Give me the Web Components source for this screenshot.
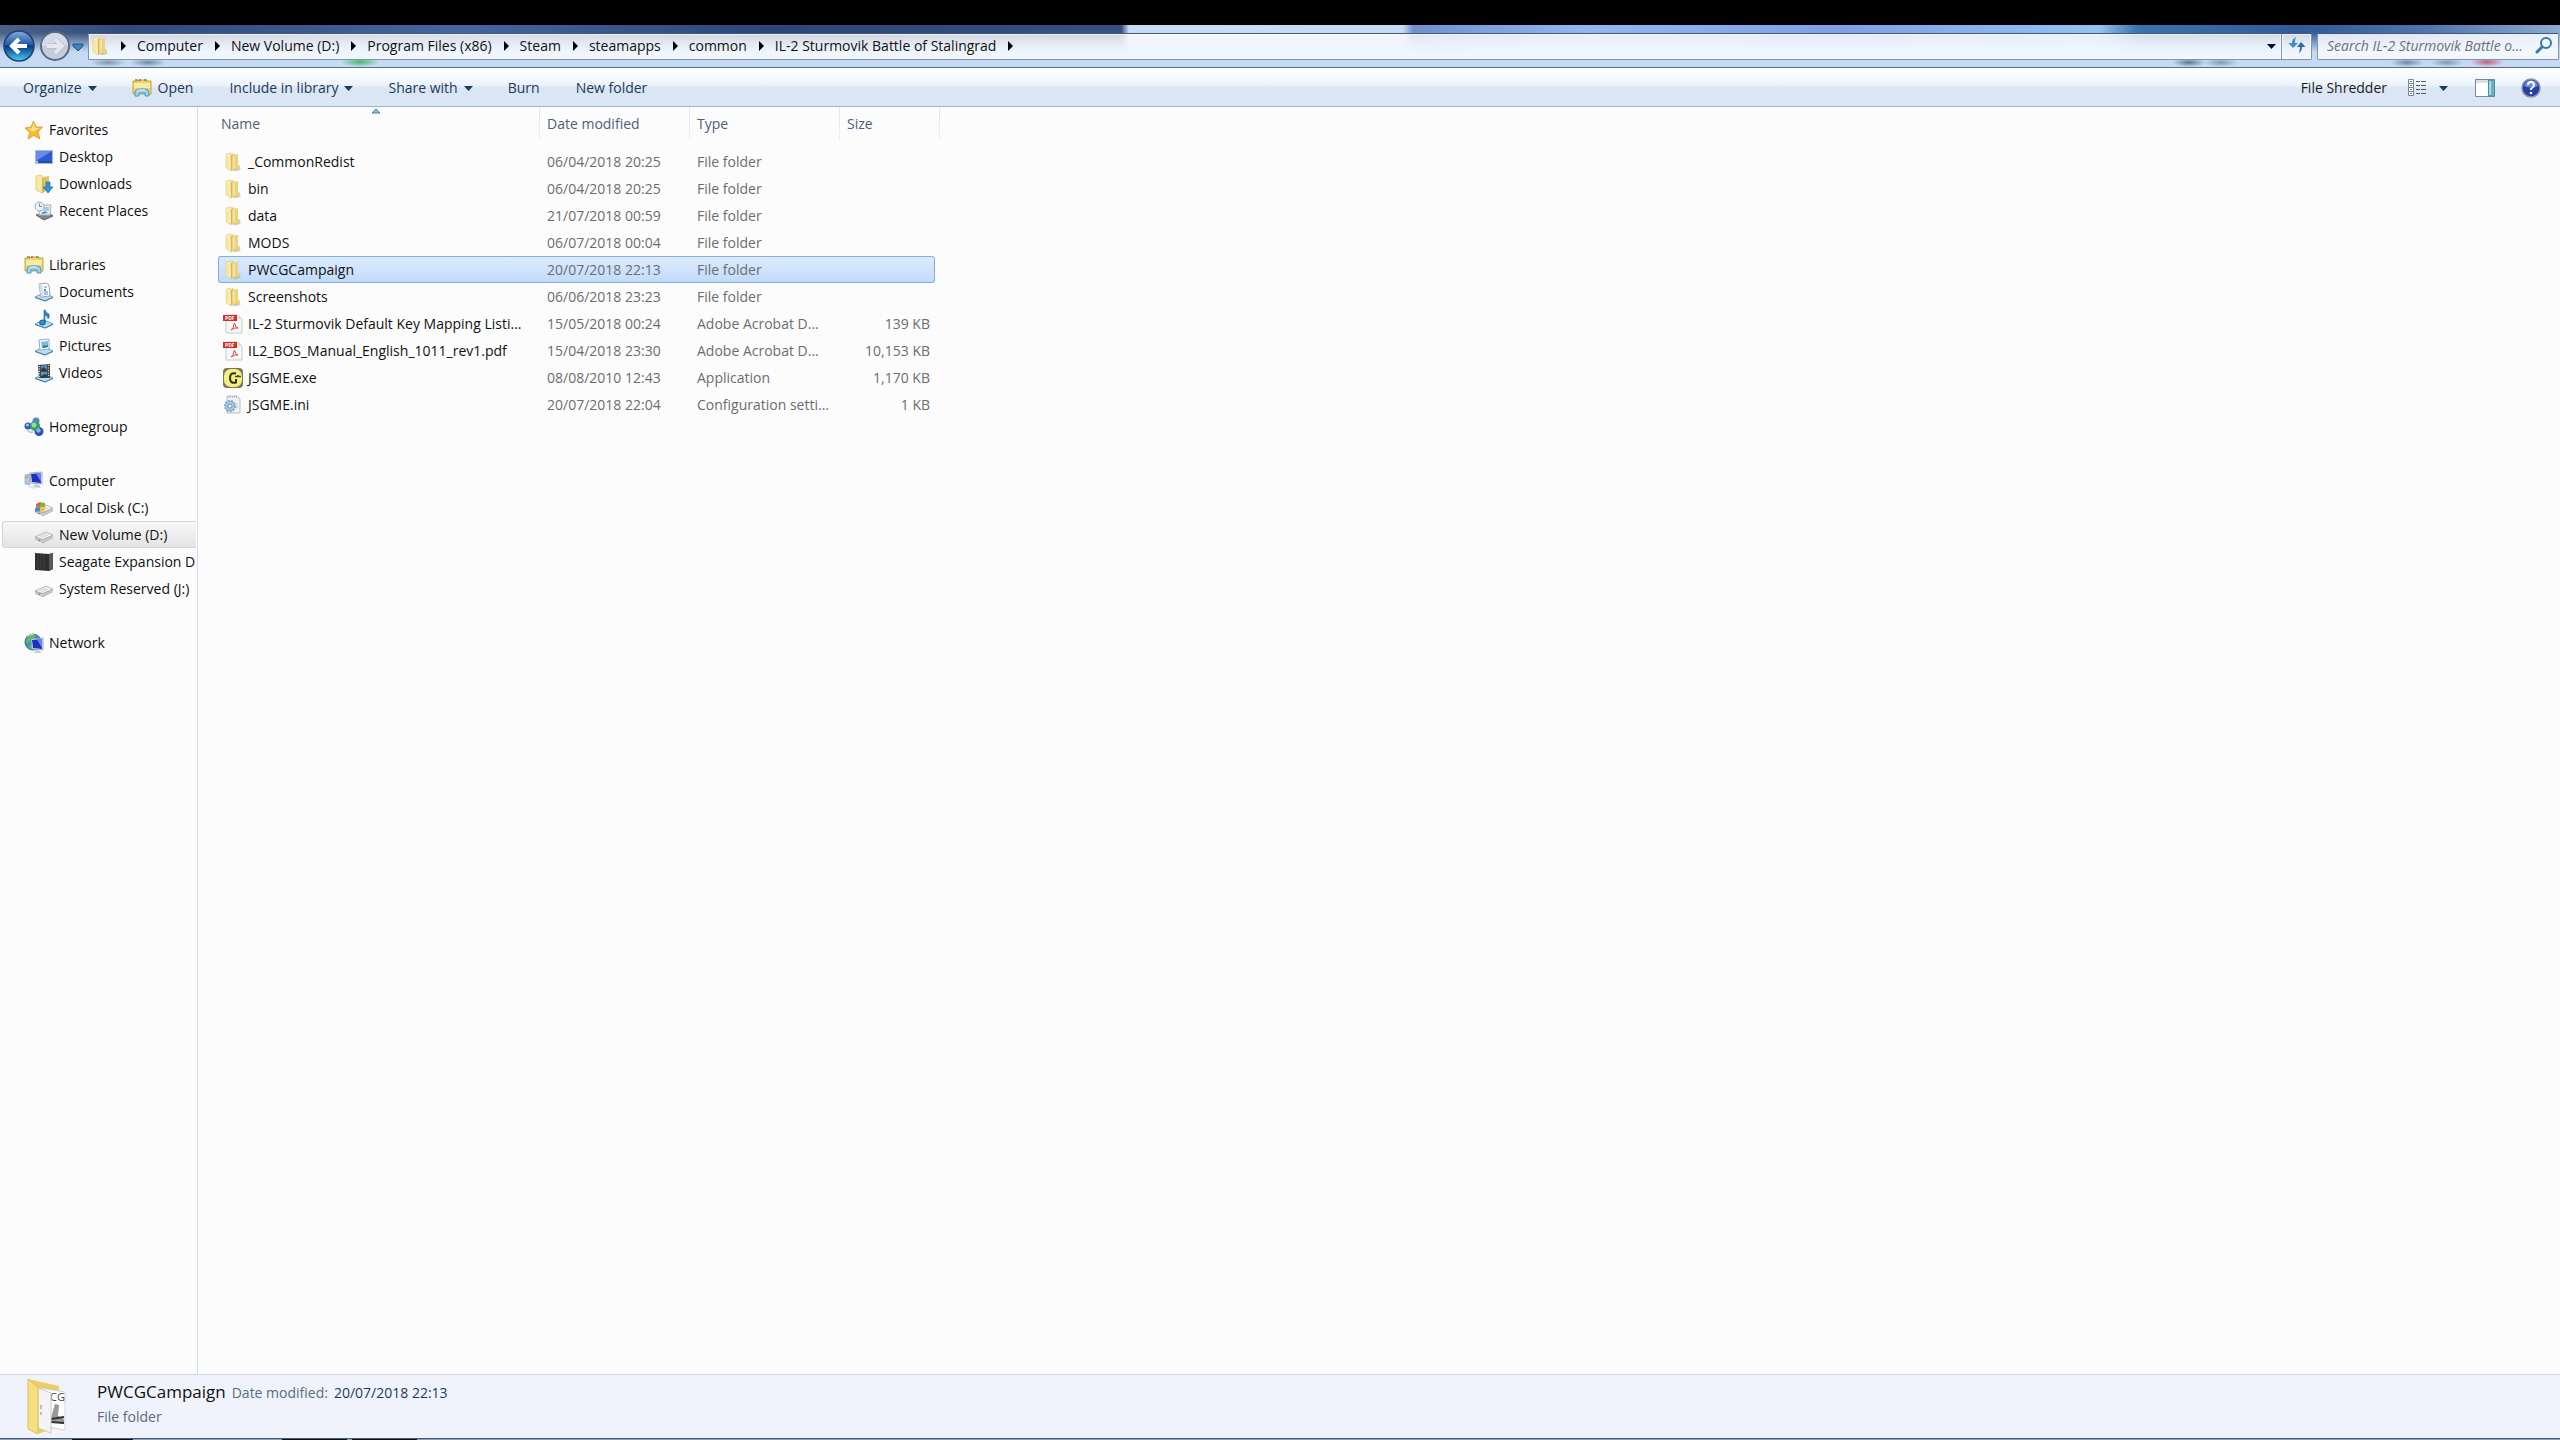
<!DOCTYPE html>
<html lang="en">
<head>
<meta charset="utf-8">
<title>IL-2 Sturmovik Battle of Stalingrad</title>
<style>
    html, body {
        margin: 0;
        height: 100%;
        background: #000;
    }

    body {
        font: 14px/20px 'Open Sans', 'Noto Sans', sans-serif;
        color: #111;
    }
</style>
</head>
<body>
<explorer-window></explorer-window>

<script>
(function() {
    // 20x20 artwork, keyed by icon name
    const drive = '<path d="M1 12 12 7l7 3.500v2.500L9 18l-8-4z" fill="#8d9090"/><path d="M1 12 12 7l7 3L9 14.500z" fill="#f1f2f2" stroke="#aaa" stroke-width=".7"/><path d="m1 12.500 8 2.500v2.500L1 15zM9 15l10-4.500v2.500L9 17.500z" fill="#c7caca"/><path d="m5 11.500 6-3 4 1.500-6 3z" fill="#dcdedf"/><path d="m4 15 2 .8" stroke="#4ba33e"/>';
    const base = '<path d="M1 15 10 11l9 4-8 4z" fill="#b9def2" stroke="#6ba3c6"/><path d="M1 15.500 11 19l8-3.500" fill="none" stroke="#437fa8"/>';
    const library = '<path d="M1 3h5l1-1h6l1 1h5v13H1z" fill="#ecd36c" stroke="#c7a544"/><path d="M2 5h16v5H2z" fill="#f8eba4"/><path d="M3 2h3M12 2h3" stroke="#5c9e54" stroke-width="1.500"/><path d="M7 2h2" stroke="#d2503a" stroke-width="1.500"/><path d="M3 18v-3q0-4 4-4h6q4 0 4 4v3h-4v-3H7v3z" fill="#9bd3ee" stroke="#5398be"/><path d="M5 13q1-1 2-1h6" stroke="#e0f5ff" fill="none"/>';
    const monitor = '<path d="m6 2 12-1v12L7 12z" fill="#dbe4ee" stroke="#8ea0b6" stroke-width=".8"/><path d="m7 3 10-1v10l-9-1z" fill="#1d2fc4"/><path d="m12 2.500 5-.5v9z" fill="#6a86ee"/><path d="m11 13 4 1 2 3-8-1z" fill="#c3ccd5"/>';
    const icons = {
        folder: '<path d="M9 16h7l2 1q-2 2-8 2z" fill="#a9a696" opacity=".6"/><path d="m3 2 5-1 3 1v14l-3 3-5-3z" fill="#f6e7a6" stroke="#e6d48e" stroke-width=".7"/><path d="m7 4 3-2v15l-2 2z" fill="#d8b65c"/><path d="m9 3 6-1v11h1q2 1 1 3l-8 2z" fill="#ecd37b"/><path d="M11 4v12" stroke="#f7e9ab" stroke-width="1.500"/><path d="m4 3 3 1v13" fill="none" stroke="#fff6cf"/>',
        star: '<path d="m9.500 1 2.600 6 6.400 0-4.500 5 2 7-6.300-3.500L4 19l1.500-6.500L1 8l6-1z" fill="#f9b933" stroke="#dd9427" stroke-width=".8"/><path d="m9.500 3 1.700 5h4.500l-6 3.500L4 9l4-.8z" fill="#ffe795"/>',
        desktop: '<path d="M1 3h18v14H1z" fill="#a9bad1"/><path d="M2 4h16v12H2z" fill="#2e5bd2"/><path d="M2 4h16L2 14z" fill="#648ce8"/><path d="M2 15h16" stroke="#1d3a88"/><circle cx="3" cy="15" r="1.300" fill="#8bd0ea"/>',
        downloads: '<path d="m9 3 6-1v14l-6 2z" fill="#e3c361"/><path d="m2 2 5-1 3 3v14l-2 1-6-3z" fill="#f8e8a0" stroke="#dcc06a" stroke-width=".7"/><path d="m8 4 2-1v15l-2 1z" fill="#d8b65c"/><path d="M12 8h4v5h3l-5 6-5-6h3z" fill="#2f94d8" stroke="#1d6eb0" stroke-width=".7"/>',
        recent: '<path d="m2 14 12-3 5 4-9 4z" fill="#80868c" stroke="#5d6468"/><path d="M6 4h11l-1 10H5z" fill="#e7eff5" stroke="#a5b2bd"/><circle cx="5.500" cy="5.500" r="4.500" fill="#eef3f7" stroke="#9daab5"/><path d="M5.500 2.500v3H8" fill="none" stroke="#7b8792"/><path d="M7 13q3-5 7-1z" fill="#4790b4"/><path d="M10 6h5v4h-5z" fill="#a9c9df"/>',
        library,
        documents: base + '<path d="m5 2 7-1 3 2 1 11-9 1z" fill="#fff" stroke="#94a2b1"/><path d="m5 2 2 13 3-1L8 2z" fill="#d6dee8"/><path d="M10 5h3M10 10h4M10 12h4" stroke="#5e86c0"/><path d="M10 7h2v2h-2z" fill="#6b7fae"/>',
        music: base + '<path d="M11 1q1 3 4 4 1 3-1 5 0-3-3-4v8h-1V1z" fill="#2782ca" stroke="#1b69ae" stroke-width=".6"/><ellipse cx="8.500" cy="13.500" rx="3" ry="2.500" fill="#2b8edb" stroke="#1a5e9f"/>',
        pictures: base + '<path d="m5 4 10-1v10l-9 1z" fill="#f1f8fd" stroke="#8db0cb"/><path d="m7 6 7-1v6l-6 1z" fill="#7ebbe2"/><path d="m8 12 2-3 2 1 2-1v2z" fill="#31765e"/>',
        videos: base + '<path d="m4 2 12-1v14H5z" fill="#4a4845"/><path d="m7 3 6-1v6H7zM7 9h6v6H7z" fill="#5196c8"/><path d="m7 6 3-2 3 3v1H7zM7 13l4-2 2 1v3H7z" fill="#2b404b"/><path d="M5.500 3v12M14.500 2v12" stroke="#ddd" stroke-dasharray="1 1.500"/>',
        homegroup: '<circle cx="12" cy="4" r="3.500" fill="#4b8bc9"/><circle cx="4" cy="9" r="3.500" fill="#2c58b8"/><circle cx="15" cy="14.500" r="4.500" fill="#2955b5"/><circle cx="11" cy="9" r="5" fill="#3c9e5b"/><circle cx="3.500" cy="8" r="1.500" fill="#9fc6f0"/><circle cx="10" cy="8" r="2.500" fill="#92dca0"/><circle cx="14.500" cy="13.500" r="2.200" fill="#89b2ee"/><path d="M4 13q1 3 5 2" stroke="#b6cae5" stroke-width="2" fill="none"/>',
        computer: '<path d="m1 4 5-1v11l-5-1z" fill="#bdc7ce" stroke="#98a4ad" stroke-width=".7"/><path d="M2 6h2" stroke="#55a457"/>' + monitor + '<path d="m4 15 8 1-1 2-8-2z" fill="#dde3e8"/>',
        network: '<circle cx="9" cy="9" r="8" fill="#3d8fc6" stroke="#2a6fa0"/><path d="M3 4q5-5 9-2-1 4-5 4-1 4-4 5-2-3 0-7zM5 12l4 1-1 4-3-2z" fill="#62b760"/><path d="M4 3q3-2 6-2" stroke="#c8f1d6" fill="none"/><g transform="translate(1 4)">' + monitor + '</g>',
        system: drive + '<path d="m2 6 4-2v5l-4 1z" fill="#e2653b"/><path d="m6 4 5 1v4L6 9z" fill="#7cb540"/><path d="m1 10 5-1v4l-5 1z" fill="#3f8fd2"/><path d="m6 9 5 1-1 4-4-1z" fill="#f2c335"/>',
        drive,
        seagate: '<path d="m1 1 14 1 4-1v16l-4 2L1 18z" fill="#2f2f30"/><path d="m15 2 4-1v16l-4 2z" fill="#59595a"/><path d="M4 2v16M7 2v16M10 2v16" stroke="#454546"/>',
        pdf: '<path d="M3 1h12l4 4v14H3z" fill="#f8f8f8" stroke="#c9c9c9"/><path d="m15 1 4 4h-4z" fill="#ddd"/><path d="M0 1h14v6H0z" fill="#cf2e20"/><text x="2" y="6" font-family="Open Sans, sans-serif" font-size="5" font-weight="700" fill="#fff">PDF</text><path d="M8 16q3-2 3-6 0-1 1 0 0 3 3 4-3-1-7 2" fill="none" stroke="#d84a3c"/>',
        exe: '<rect width="20" height="20" rx="4" fill="#77775a"/><rect x="1" y="1" width="18" height="18" rx="7" fill="#f6f07c"/><path d="M13 5.500Q7 4 7 10t6 4.500V11" fill="none" stroke="#333025" stroke-width="2"/><path d="M12 8.500h6M15 7v2" stroke="#444" stroke-width="1.500"/>',
        ini: '<path d="M4 1h10l3 3v14H4z" fill="#eef1f4" stroke="#b6bec5"/><path d="M5 2h10" stroke="#8d98a3" stroke-dasharray="1 1"/><circle cx="7" cy="11" r="5" fill="#a8c9e4" stroke="#7ea3c6" stroke-width="2" stroke-dasharray="2 1"/><circle cx="7" cy="11" r="2" fill="#edf5fb" stroke="#6995bd"/><path d="M13 9h2M13 12h2" stroke="#bcc5cd"/>',
        refresh: '<path d="M9 2Q5 4 5 8H1.500L6 13l5-5H8q0-4 1-6z" fill="#3f8bc8"/><path d="M12 18q3-2 3-6h3.500L14 7l-4 5h3q0 3-1 6z" fill="#2c6bab"/>',
        search: '<circle cx="12" cy="7" r="5" fill="#f3faff" stroke="#3975ad" stroke-width="2"/><path d="m8 11-5 5" stroke="#3975ad" stroke-width="3" stroke-linecap="round"/>',
        views: '<path d="M1.500 1.500h5v4h-5zM1.500 5.500h5v4h-5zM1.500 9.500h5v4h-5zM1.500 13.500h5v4h-5z" fill="#fff" stroke="#7c8794"/><path d="M3 3.500h2M3 7.500h2M3 11.500h2M3 15.500h2" stroke="#627e9d"/><path d="M9 3.500h4m1 0h5M9 7.500h4m1 0h5M9 11.500h4m1 0h5M9 15.500h4m1 0h5" stroke="#4f5b68"/>',
        pane: '<path d="M.5 1.500h19v17H.5z" fill="#fff" stroke="#74899b"/><path d="M1 2h18v3H1z" fill="#d4e0ea"/><path d="M13.500 2h6v16h-6z" fill="#6db1c4" stroke="#4c8aa0"/><path d="M15 3v14" stroke="#aadbe5" stroke-width="2"/>',
        help: '<circle cx="10" cy="10" r="9" fill="#263fa8" stroke="#8793ad" stroke-width="1.500"/><path d="M3 8q2-6 7-6t7 6q-7 3-14 0z" fill="#6e8ad9"/><path d="M7 7q0-3 3-3t3 3q0 2-3 4v1" fill="none" stroke="#fff" stroke-width="2"/><circle cx="10" cy="15" r="1.300" fill="#fff"/>',
        down: '<path d="M6 8h9l-4.500 5z" fill="currentColor"/>',
        right: '<path d="M8 5v10l5-5z" fill="#000"/>'
    };

    function define(name, html, setup) {
        const tmpl = document.createElement('template');
        tmpl.innerHTML = html;
        customElements.define(name, class extends HTMLElement {
            constructor() {
                super();
                this.attachShadow({ mode: 'open' });
                this.shadowRoot.appendChild(tmpl.content.cloneNode(true));
            }

            connectedCallback() {
                if (setup) setup(this, this.shadowRoot);
            }
        });
    }

    define('win-icon', `
    <style>
        :host { display: inline-block; width: 20px; height: 20px; flex: none; }
        svg { display: block; width: 100%; height: 100%; }
    </style>
    <svg viewBox="0 0 20 20" aria-hidden="true"></svg>
    `, (host, root) => {
        root.querySelector('svg').innerHTML = icons[host.getAttribute('name')] || '';
    });

    define('nav-buttons', `
    <style>
        :host { display: flex; align-items: center; flex: none; }
        button { border: 0; padding: 0; background: none; display: block; }
        svg { display: block; }
        .round { width: 36px; height: 34px; }
        .history { width: 12px; height: 20px; }
    </style>
    <button class="round" aria-label="Back">
        <svg width="36" height="34" viewBox="0 0 36 34">
            <defs>
                <linearGradient id="back" x2="0" y2="1">
                    <stop offset="0" stop-color="#86acdc"/><stop offset=".45" stop-color="#245aab"/>
                    <stop offset=".5" stop-color="#083781"/><stop offset="1" stop-color="#45cdf5"/>
                </linearGradient>
            </defs>
            <circle cx="19" cy="17" r="15" fill="url(#back)" stroke="#243f6f" stroke-width="1.500"/>
            <path d="M27 17H12m7-7-7 7 7 7" fill="none" stroke="#fff" stroke-width="4"/>
        </svg>
    </button>
    <button class="round" aria-label="Forward">
        <svg width="36" height="34" viewBox="0 0 36 34">
            <circle cx="19" cy="17" r="14" fill="#c5cddb" stroke="#5d6983" stroke-width="2"/>
            <path d="M6 17a13 13 0 0 1 26 0z" fill="#d5dbe6"/>
            <path d="M11 17h15m-7-7 7 7-7 7" fill="none" stroke="#a9b3c4" stroke-width="5"/>
            <path d="M11 17h15m-7-7 7 7-7 7" fill="none" stroke="#e4e8ef" stroke-width="4"/>
        </svg>
    </button>
    <button class="history" aria-label="Recent pages">
        <svg width="12" height="20" viewBox="0 0 12 20"><path d="M1 8h10v2l-5 5-5-5z" fill="#3485c7" stroke="#234d7f"/></svg>
    </button>
    `);

    define('address-bar', `
    <style>
        :host { display: flex; flex: 1; min-width: 0; }
        nav, .refresh {
            box-sizing: border-box;
            height: 27px;
            border: 1px solid #8092ac;
            border-top-color: #46587a;
            background: linear-gradient(rgba(255, 255, 255, .76), rgba(246, 250, 255, .86));
            box-shadow: inset 0 0 0 1px rgba(255, 255, 255, .6);
        }
        nav { flex: 1; display: flex; align-items: center; padding-left: 1px; min-width: 0; }
        .refresh { width: 30px; padding: 0 4px; border-left: 0; border-radius: 0 2px 2px 0; }
        ol { display: flex; flex: 1; list-style: none; margin: 0; padding: 0; min-width: 0; }
        li { display: flex; align-items: center; }
        li win-icon { margin: 0 4px; }
        li:first-child win-icon { margin-left: 3px; }
        a { color: #111; text-decoration: none; white-space: nowrap; }
        .previous { border: 0; padding: 0; background: none; width: 20px; height: 20px; color: #04043a; }
    </style>
    <nav aria-label="Address">
        <win-icon name="folder"></win-icon>
        <ol></ol>
        <button class="previous" aria-label="Previous locations"><win-icon name="down"></win-icon></button>
    </nav>
    <button class="refresh" aria-label="Refresh"><win-icon name="refresh"></win-icon></button>
    `, (host, root) => {
        const parts = host.getAttribute('path').split('|');
        const arrow = '<win-icon name="right"></win-icon>';
        root.querySelector('ol').innerHTML = parts
            .map(part => `<li>${arrow}<a href="#">${part}</a></li>`)
            .join('') + `<li>${arrow}</li>`;
    });

    define('search-box', `
    <style>
        :host {
            display: flex;
            align-items: center;
            box-sizing: border-box;
            width: 242px;
            height: 27px;
            padding: 0 4px 0 9px;
            border: 1px solid #8092ac;
            border-top-color: #46587a;
            border-radius: 2px;
            background: rgba(249, 252, 255, .86);
        }
        input {
            flex: 1;
            min-width: 0;
            border: 0;
            padding: 0;
            outline: 0;
            background: none;
            font: italic 14px/20px 'Open Sans', 'Noto Sans', sans-serif;
        }
        input::placeholder { color: #6d7078; opacity: 1; }
    </style>
    <input type="text" aria-label="Search" placeholder="Search IL-2 Sturmovik Battle o...">
    <win-icon name="search"></win-icon>
    `);

    // Glass strip: the windows behind it show through as soft colour
    define('title-strip', `
    <style>
        :host {
            display: flex;
            align-items: center;
            gap: 5px;
            box-sizing: border-box;
            height: 43px;
            padding: 0 1px 0 0;
            border-bottom: 1px solid #566f8f;
            background:
                radial-gradient(closest-side, #45b86d, transparent) 340px 100% / 40px 10px no-repeat,
                radial-gradient(closest-side, #8296b0, transparent) 90px 100% / 36px 9px no-repeat,
                radial-gradient(closest-side, #7488a3, transparent) 130px 100% / 36px 9px no-repeat,
                radial-gradient(closest-side, #c2607a, transparent) right 56px bottom 0 / 34px 10px no-repeat,
                radial-gradient(closest-side, #8298b3, transparent) right 96px bottom 0 / 34px 9px no-repeat,
                radial-gradient(closest-side, #6f86a5, transparent) right 136px bottom 0 / 34px 9px no-repeat,
                radial-gradient(closest-side, #8298b3, transparent) right 322px bottom 0 / 34px 9px no-repeat,
                radial-gradient(closest-side, #5f748f, transparent) right 354px bottom 0 / 34px 9px no-repeat,
                linear-gradient(transparent 8px, #c6dbf3 27px),
                linear-gradient(90deg, #4d6288, #304a7c 5%, #4566a0 18%, #2c4679 30%, #36507f 43.8%,
                    #c9dcf5 44.1%, #c6daf6 54.8%, #6f91d0 55.2%, #93b7f2 62%, #7fa0e8 72%,
                    #94c2f2 82%, #3a73b0 83.5%, #315a97 90%, #5277af 95%, #8caad2);
        }
    </style>
    <slot></slot>
    `);

    define('command-bar', `
    <style>
        :host {
            display: flex;
            justify-content: space-between;
            box-sizing: border-box;
            height: 39px;
            padding: 1px 19px 0 23px;
            border-bottom: 1px solid #a0afc3;
            background: linear-gradient(#fff, #edf5fc 16px, #e3ecf7 19px, #dbe5f3 20px, #dbe7f5);
        }
        div { display: flex; align-items: center; }
        .tasks { gap: 36px; }
        button {
            display: flex;
            align-items: center;
            gap: 6px;
            border: 0;
            padding: 0;
            background: none;
            font: inherit;
            color: #1e395b;
        }
        .menu { gap: 0; }
        .menu win-icon { margin-right: -6px; }
        .view { gap: 6px; }
        .view win-icon + win-icon { margin-right: -4px; }
        .tools { gap: 26px; }
        .shred { color: #1c1c1c; margin-right: -6px; }
    </style>
    <div class="tasks">
        <button class="menu">Organize<win-icon name="down"></win-icon></button>
        <button><win-icon name="library"></win-icon>Open</button>
        <button class="menu">Include in library<win-icon name="down"></win-icon></button>
        <button class="menu">Share with<win-icon name="down"></win-icon></button>
        <button>Burn</button>
        <button>New folder</button>
    </div>
    <div class="tools">
        <button class="shred">File Shredder</button>
        <button class="view" aria-label="Change your view"><win-icon name="views"></win-icon><win-icon name="down"></win-icon></button>
        <button aria-label="Show the preview pane"><win-icon name="pane"></win-icon></button>
        <button aria-label="Get help"><win-icon name="help"></win-icon></button>
    </div>
    `);

    define('nav-item', `
    <style>
        :host { display: block; }
        a {
            display: flex;
            align-items: center;
            gap: 5px;
            box-sizing: border-box;
            height: 27px;
            padding-left: 21px;
            border: 1px solid transparent;
            border-right: 0;
            color: #111;
            text-decoration: none;
            white-space: nowrap;
            overflow: hidden;
        }
        :host([child]) a { padding-left: 31px; }
        :host([current]) a {
            border-color: #d6d6d6;
            border-radius: 3px 0 0 3px;
            background: linear-gradient(#f8f8f8, #e4e4e4);
        }
    </style>
    <a href="#"><slot></slot></a>
    `, (host, root) => {
        const icon = document.createElement('win-icon');
        icon.setAttribute('name', host.getAttribute('icon'));
        root.querySelector('a').prepend(icon);
    });

    define('nav-tree', `
    <style>
        :host {
            display: flex;
            flex-direction: column;
            gap: 27px;
            box-sizing: border-box;
            width: 198px;
            flex: none;
            padding: 9px 1px 0 2px;
            border-right: 1px solid #d4dded;
            overflow: hidden;
        }
    </style>
    <section>
        <nav-item icon="star">Favorites</nav-item>
        <nav-item child icon="desktop">Desktop</nav-item>
        <nav-item child icon="downloads">Downloads</nav-item>
        <nav-item child icon="recent">Recent Places</nav-item>
    </section>
    <section>
        <nav-item icon="library">Libraries</nav-item>
        <nav-item child icon="documents">Documents</nav-item>
        <nav-item child icon="music">Music</nav-item>
        <nav-item child icon="pictures">Pictures</nav-item>
        <nav-item child icon="videos">Videos</nav-item>
    </section>
    <section>
        <nav-item icon="homegroup">Homegroup</nav-item>
    </section>
    <section>
        <nav-item icon="computer">Computer</nav-item>
        <nav-item child icon="system">Local Disk (C:)</nav-item>
        <nav-item child current icon="drive">New Volume (D:)</nav-item>
        <nav-item child icon="seagate">Seagate Expansion D</nav-item>
        <nav-item child icon="drive">System Reserved (J:)</nav-item>
    </section>
    <section>
        <nav-item icon="network">Network</nav-item>
    </section>
    `);

    const files = [
        ['folder', '_CommonRedist', '06/04/2018 20:25', 'File folder', ''],
        ['folder', 'bin', '06/04/2018 20:25', 'File folder', ''],
        ['folder', 'data', '21/07/2018 00:59', 'File folder', ''],
        ['folder', 'MODS', '06/07/2018 00:04', 'File folder', ''],
        ['folder', 'PWCGCampaign', '20/07/2018 22:13', 'File folder', ''],
        ['folder', 'Screenshots', '06/06/2018 23:23', 'File folder', ''],
        ['pdf', 'IL-2 Sturmovik Default Key Mapping Listi...', '15/05/2018 00:24', 'Adobe Acrobat D...', '139 KB'],
        ['pdf', 'IL2_BOS_Manual_English_1011_rev1.pdf', '15/04/2018 23:30', 'Adobe Acrobat D...', '10,153 KB'],
        ['exe', 'JSGME.exe', '08/08/2010 12:43', 'Application', '1,170 KB'],
        ['ini', 'JSGME.ini', '20/07/2018 22:04', 'Configuration setti...', '1 KB']
    ];

    define('file-list', `
    <style>
        :host { display: block; flex: 1; min-width: 0; padding-left: 20px; }
        table { table-layout: fixed; width: 722px; border-collapse: separate; border-spacing: 0; }
        th, td { box-sizing: border-box; padding: 0 0 0 7px; text-align: left; font-weight: 400; white-space: nowrap; }
        thead tr > * {
            height: 33px;
            border-right: 1px solid;
            border-image: linear-gradient(#dde5f0, #eef1f6) 1;
            color: #4c607a;
        }
        thead th:nth-child(4), thead td { padding: 0; }
        thead th:nth-child(4) { border-right: 0; padding-left: 7px; }
        thead th:first-child { padding-left: 3px; }
        .sorted { position: relative; }
        .sorted svg { position: absolute; left: 50%; top: 1px; margin-left: -8px; }
        tbody::before { content: ''; display: block; height: 8px; }
        tbody td { height: 27px; color: #6d6d6d; border: 0 solid #84acdd; }
        tbody td:first-child { padding-left: 5px; color: #111; }
        tbody td:nth-child(4) { text-align: right; padding-right: 5px; }
        .name { display: flex; align-items: center; gap: 5px; }
        .selected td { background: linear-gradient(#dcebfc, #c1dbfc); border-width: 1px 0; }
        .selected td:first-child { border-left-width: 1px; border-radius: 3px 0 0 3px; padding-left: 4px; }
        .selected td:nth-child(4) { border-right-width: 1px; border-radius: 0 3px 3px 0; }
    </style>
    <table>
        <colgroup>
            <col style="width: 322px"><col style="width: 150px"><col style="width: 150px"><col style="width: 95px"><col style="width: 5px">
        </colgroup>
        <thead>
            <tr>
                <th class="sorted" aria-sort="ascending">Name<svg width="10" height="6" viewBox="0 0 10 6"><path d="m1 5 4-4 4 4z" fill="#8fc3d8" stroke="#51809b"/></svg></th>
                <th>Date modified</th>
                <th>Type</th>
                <th>Size</th>
                <td></td>
            </tr>
        </thead>
        <tbody></tbody>
    </table>
    `, (host, root) => {
        root.querySelector('tbody').innerHTML = files.map(([icon, name, date, type, size]) => `
            <tr class="${name === host.getAttribute('selected') ? 'selected' : ''}">
                <td><div class="name"><win-icon name="${icon}"></win-icon>${name}</div></td>
                <td>${date}</td>
                <td>${type}</td>
                <td>${size}</td>
            </tr>`).join('');
    });

    define('details-pane', `
    <style>
        :host {
            display: flex;
            gap: 29px;
            box-sizing: border-box;
            height: 65px;
            padding: 4px 0 0 26px;
            border-top: 1px solid #cdd8e8;
            border-bottom: 1px solid #465b78;
            background: #f0f3fb;
        }
        svg { flex: none; }
        .info { padding-top: 1px; line-height: 24px; color: #5a6b80; }
        .line { display: flex; align-items: baseline; gap: 6px; }
        .title { font-size: 17px; color: #111; }
        .value { color: #1e395b; }
    </style>
    <svg width="42" height="58" viewBox="0 0 42 58" aria-hidden="true">
        <path d="m2 0 31 7v40L12 55 2 49z" fill="#ebcf65"/>
        <path d="m14 9 25 4v38l-22-4z" fill="#fff" stroke="#d4d4d4"/>
        <text x="24" y="22" font-family="Open Sans, sans-serif" font-size="11" fill="#444">CG</text>
        <path d="m29 25 4 1-1 11 6 3v5l-14-3z" fill="#999"/><path d="m25 40 13-2M25 43l13 1" stroke="#333" stroke-width="2"/>
        <path d="m12 9 13 5v40l-13-5z" fill="#f4f4f4" stroke="#ccc"/>
        <path d="M15 26v4M15 33v3" stroke="#888"/>
        <path d="m2 0 10 8v47L2 50z" fill="#f5df80" stroke="#dfc05b"/>
    </svg>
    <div class="info">
        <div class="line">
            <span class="title">PWCGCampaign</span>
            <span>Date modified:</span>
            <span class="value">20/07/2018 22:13</span>
        </div>
        <div>File folder</div>
    </div>
    `);

    define('explorer-window', `
    <style>
        :host {
            display: flex;
            flex-direction: column;
            box-sizing: border-box;
            height: 100vh;
            padding-top: 25px;
        }
        main { display: flex; flex: 1; min-height: 0; background: #fcfcfc; }
        .location { display: flex; align-items: center; gap: 4px; flex: 1; min-width: 0; }
        /* top edge of the taskbar, dark over its buttons */
        footer {
            height: 1px;
            background: linear-gradient(90deg, #8ea0b8 72px, #111 72px 133px, #8ea0b8 133px 282px,
                #111 282px 347px, #8ea0b8 347px 352px, #111 352px 417px, #8ea0b8 417px);
        }
    </style>
    <title-strip>
        <div class="location">
            <nav-buttons></nav-buttons>
            <address-bar path="Computer|New Volume (D:)|Program Files (x86)|Steam|steamapps|common|IL-2 Sturmovik Battle of Stalingrad"></address-bar>
        </div>
        <search-box></search-box>
    </title-strip>
    <command-bar></command-bar>
    <main>
        <nav-tree></nav-tree>
        <file-list selected="PWCGCampaign"></file-list>
    </main>
    <details-pane></details-pane>
    <footer></footer>
    `);
})();
</script>
</body>
</html>
